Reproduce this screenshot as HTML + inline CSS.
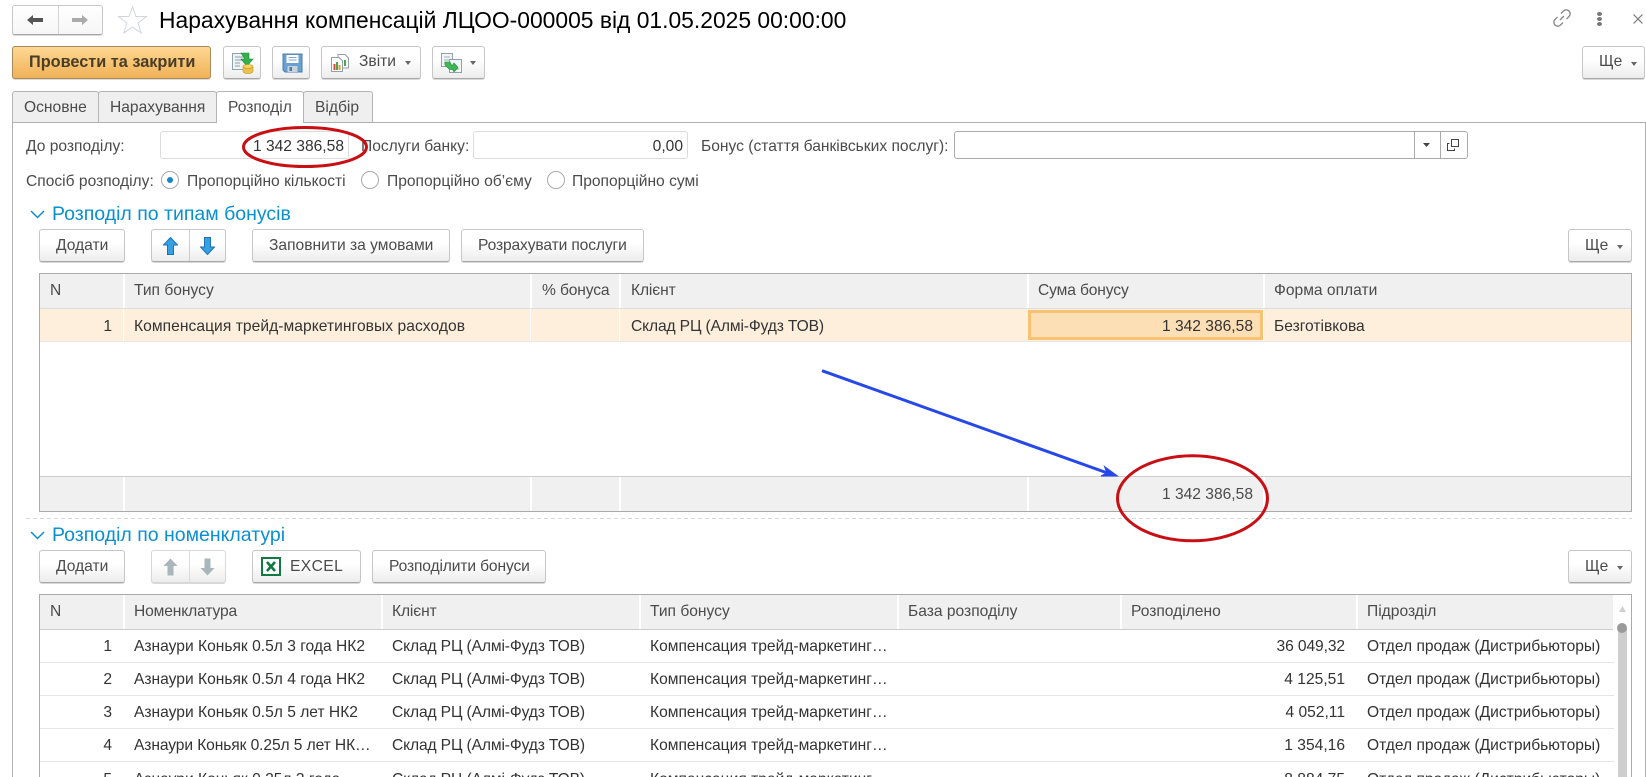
<!DOCTYPE html>
<html lang="uk">
<head>
<meta charset="utf-8">
<title>Нарахування компенсацій</title>
<style>
html,body{margin:0;padding:0;background:#fff;overflow:hidden}
#p{position:relative;width:1646px;height:777px;overflow:hidden;background:#fff;font-family:"Liberation Sans",Arial,sans-serif;font-size:15.6px;color:#4b4b4b}
#p div,#p span,#p svg{position:absolute;box-sizing:border-box}
.t{white-space:nowrap;line-height:20px;height:20px}
.d{color:#333}
.k{letter-spacing:-.13px}
.c{height:7px;overflow:hidden}
.btn{background:linear-gradient(#fff 0,#fff 40%,#ededed 100%);border:1px solid #c6c6c6;border-bottom:1px solid #a8a8a8;border-radius:3px;box-shadow:0 1px 0 #d8d8d8}
.in{background:#fff;border:1px solid #dcdcdc;border-radius:3px}
.tab{background:#efefef;border:1px solid #b4b4b4;border-bottom:none;border-radius:3px 3px 0 0;height:31px;top:91px}
.rad{width:18px;height:18px;border:1px solid #aaa;border-radius:50%;background:#fff;top:171px}
.h{background:#f0f0f0}
.sep{width:2px;background:#fff}
.hl{height:1px;background:#e6e6e6;left:40px}
.sec{color:#0a90d0;font-size:19.5px;line-height:24px;height:24px;white-space:nowrap}
</style>
</head>
<body>
<div id="p">
<!-- top nav -->
<div class="btn" style="left:12px;top:5px;width:91px;height:30px;background:linear-gradient(#fff,#f6f6f6)"></div>
<div style="left:58px;top:6px;width:1px;height:28px;background:#d4d4d4"></div>
<svg style="left:27px;top:14px" width="16" height="12" viewBox="0 0 16 12"><path d="M0 6 6 1V4H16V8H6V11Z" fill="#555"/></svg>
<svg style="left:72px;top:14px" width="16" height="12" viewBox="0 0 16 12"><path d="M16 6 10 1V4H0V8H10V11Z" fill="#aaa"/></svg>
<svg style="left:117px;top:5px" width="31" height="30" viewBox="0 0 31 30"><path d="M15.5 2 19 11.5H29.5L21 18 24.2 28 15.5 22 6.8 28 10 18 1.5 11.5H12Z" fill="#fff" stroke="#d0d6da" stroke-width="1"/></svg>
<div class="t" style="left:159px;top:8px;height:24px;line-height:24px;font-size:22.85px;color:#000">Нарахування компенсацій ЛЦОО-000005 від 01.05.2025 00:00:00</div>
<svg style="left:1552px;top:8px" width="20" height="20" viewBox="0 0 20 20" fill="none" stroke="#8a8a8a" stroke-width="1.4"><path d="M8 12 12 8"/><path d="M9 5.5 11.5 3a3.4 3.4 0 0 1 5.5 5.5L14.500 11"/><path d="M11 14.500 8.500 17A3.400 3.400 0 0 1 3 11.500L5.500 9"/></svg>
<div style="left:1597px;top:12px;width:5px;height:4px;border-radius:50%;background:#777"></div>
<div style="left:1597px;top:17px;width:5px;height:4px;border-radius:50%;background:#777"></div>
<div style="left:1597px;top:22px;width:5px;height:4px;border-radius:50%;background:#777"></div>
<svg style="left:1632px;top:13px" width="12" height="12" viewBox="0 0 12 12"><path d="M1.500 1.500 10.500 10.500M10.500 1.500 1.500 10.500" stroke="#777" stroke-width="1.200"/></svg>

<!-- toolbar -->
<div style="left:12px;top:46px;width:199px;height:33px;border:1px solid #a98a58;border-radius:3px;background:linear-gradient(#fed793,#f0b257);box-shadow:0 1px 0 #ddd"></div>
<div class="t" style="left:29px;top:52px;font-weight:bold;font-size:16.3px;color:#4a3c25">Провести та закрити</div>

<div class="btn" style="left:223px;top:46px;width:38px;height:33px"></div>
<svg style="left:231px;top:51px" width="24" height="23" viewBox="0 0 24 23"><rect x="1.500" y="2.500" width="14" height="16" fill="#eef3f6" stroke="#8fa3ad"/><path d="M4 6h9M4 9h7M4 12h5M4 15h5" stroke="#8aa0aa"/><path d="M8 2h8v6h4l-6 7-6-7h4z" transform="translate(2 0)" fill="#35b04a" stroke="#1f8a38" stroke-width=".6"/><ellipse cx="17" cy="15.500" rx="5" ry="2" fill="#f5d262" stroke="#c09a28" stroke-width=".6"/><path d="M12 15.500v5c0 1.100 2.200 2 5 2s5-.9 5-2v-5c0 1.100-2.200 2-5 2s-5-.9-5-2z" fill="#eec24a" stroke="#c09a28" stroke-width=".6"/></svg>

<div class="btn" style="left:272px;top:46px;width:38px;height:33px"></div>
<svg style="left:282px;top:53px" width="21" height="20" viewBox="0 0 21 20"><path d="M1 1H20V19H3L1 17Z" fill="#6a9fd2" stroke="#4b7cab"/><rect x="4.500" y="2" width="12" height="8" fill="#fff"/><path d="M6.500 4.500h8M6.500 7h8" stroke="#7fa6c9"/><rect x="5.500" y="13" width="10" height="6" fill="#c7d3dc"/><rect x="7.500" y="14" width="2.500" height="4" fill="#52789e"/></svg>

<div class="btn" style="left:321px;top:46px;width:100px;height:33px"></div>
<svg style="left:330px;top:53px" width="20" height="20" viewBox="0 0 20 20"><path d="M8 1.500H15L18.500 5V15H8Z" fill="#fff" stroke="#8fa0a8"/><path d="M1.500 4.500H9L12.500 8V18.500H1.500Z" fill="#fff" stroke="#8fa0a8"/><rect x="3.500" y="11" width="2" height="6" fill="#d8473a"/><rect x="6" y="9" width="2" height="8" fill="#4aa84a"/><rect x="8.500" y="12" width="2" height="5" fill="#e39b33"/><rect x="14" y="7" width="2" height="6" fill="#4aa84a"/></svg>
<div class="t" style="left:359px;top:52px">Звіти</div>
<svg style="left:405px;top:61px" width="6" height="4"><path d="M0 0H6L3 4Z" fill="#666"/></svg>

<div class="btn" style="left:432px;top:46px;width:53px;height:33px"></div>
<svg style="left:440px;top:52px" width="23" height="22" viewBox="0 0 23 22"><rect x="1.500" y="1.500" width="11" height="13" fill="#f2f5f6" stroke="#8fa0a8"/><rect x="9.500" y="7.500" width="12" height="13" fill="#f2f5f6" stroke="#8fa0a8"/><path d="M4 5h6M4 8h6M4 11h4M13 17h6" stroke="#9db0b8"/><path d="M5 10h5l2 4 2-3 4 4.500-4 4.500-1-2-4-1-4-4z" fill="#3dba55" stroke="#1f8a38" stroke-width=".6"/></svg>
<svg style="left:470px;top:61px" width="6" height="4"><path d="M0 0H6L3 4Z" fill="#666"/></svg>

<div class="btn" style="left:1582px;top:46px;width:63px;height:33px"></div>
<div class="t" style="left:1599px;top:52px">Ще</div>
<svg style="left:1631px;top:62px" width="6" height="4"><path d="M0 0H6L3 4Z" fill="#666"/></svg>

<!-- panel -->
<div style="left:12px;top:122px;width:1634px;height:655px;border:1px solid #b0b0b0;border-bottom:none"></div>
<div class="tab" style="left:12px;width:87px"></div>
<div class="t" style="left:24px;top:98px">Основне</div>
<div class="tab" style="left:98px;width:119px"></div>
<div class="t" style="left:110px;top:98px">Нарахування</div>
<div class="tab" style="left:216px;width:88px;background:#fff;height:32px"></div>
<div class="t" style="left:228px;top:98px">Розподіл</div>
<div class="tab" style="left:303px;width:70px"></div>
<div class="t" style="left:315px;top:98px">Відбір</div>

<!-- fields -->
<div class="t" style="left:26px;top:137px">До розподілу:</div>
<div class="in" style="left:160px;top:131px;width:189px;height:28px"></div>
<div class="t d" style="right:1302px;top:137px">1 342 386,58</div>
<div class="t" style="left:361px;top:137px">Послуги банку:</div>
<div class="in" style="left:473px;top:131px;width:215px;height:28px"></div>
<div class="t d" style="right:963px;top:137px">0,00</div>
<div class="t" style="left:701px;top:137px">Бонус (стаття банківських послуг):</div>
<div class="in" style="left:954px;top:131px;width:514px;height:28px;border-color:#aaa"></div>
<div style="left:1414px;top:132px;width:1px;height:26px;background:#aaa"></div>
<div style="left:1440px;top:132px;width:1px;height:26px;background:#aaa"></div>
<svg style="left:1423px;top:143px" width="7" height="4"><path d="M0 0H7L3.500 4Z" fill="#444"/></svg>
<svg style="left:1446px;top:138px" width="14" height="14" viewBox="0 0 14 14" fill="none" stroke="#444"><rect x="5.500" y="1.500" width="7" height="7"/><path d="M3.500 5.500H1.500V12.500H8.500V10.500"/></svg>

<div class="t" style="left:26px;top:172px">Спосіб розподілу:</div>
<div class="rad" style="left:161px"></div>
<div style="left:167px;top:177px;width:6px;height:6px;border-radius:50%;background:#1a86c8"></div>
<div class="t" style="left:187px;top:172px">Пропорційно кількості</div>
<div class="rad" style="left:361px"></div>
<div class="t" style="left:387px;top:172px">Пропорційно об’єму</div>
<div class="rad" style="left:547px"></div>
<div class="t" style="left:572px;top:172px">Пропорційно сумі</div>

<!-- section 1 -->
<svg style="left:30px;top:210px" width="15" height="9" fill="none"><path d="M1 1 7.500 7.500 14 1" stroke="#0a90d0" stroke-width="1.500"/></svg>
<div class="sec" style="left:52px;top:202px">Розподіл по типам бонусів</div>
<div class="btn" style="left:39px;top:229px;width:86px;height:33px"></div>
<div class="t" style="left:56px;top:236px">Додати</div>
<div class="btn" style="left:151px;top:229px;width:75px;height:33px"></div>
<div style="left:189px;top:230px;width:1px;height:31px;background:#ccc"></div>
<svg style="left:163px;top:237px" width="15" height="18" viewBox="0 0 15 18"><path d="M7.500 .5 14.500 8H10.500V17.500H4.500V8H.5Z" fill="#35a0e4" stroke="#1a74b0"/></svg>
<svg style="left:200px;top:237px" width="15" height="18" viewBox="0 0 15 18"><path d="M7.500 17.500 14.500 10H10.500V.5H4.500V10H.5Z" fill="#35a0e4" stroke="#1a74b0"/></svg>
<div class="btn" style="left:252px;top:229px;width:198px;height:33px"></div>
<div class="t" style="left:269px;top:236px">Заповнити за умовами</div>
<div class="btn" style="left:461px;top:229px;width:183px;height:33px"></div>
<div class="t k" style="left:478px;top:236px">Розрахувати послуги</div>
<div class="btn" style="left:1568px;top:229px;width:64px;height:33px"></div>
<div class="t" style="left:1585px;top:236px">Ще</div>
<svg style="left:1617px;top:245px" width="6" height="4"><path d="M0 0H6L3 4Z" fill="#666"/></svg>

<!-- table 1 -->
<div style="left:39px;top:273px;width:1593px;height:239px;border:1px solid #aaa;background:#fff"></div>
<div class="h" style="left:40px;top:274px;width:1591px;height:34px"></div>
<div style="left:40px;top:308px;width:1591px;height:1px;background:#ddd"></div>
<div style="left:40px;top:309px;width:1591px;height:32px;background:#feefdc"></div>
<div style="left:40px;top:341px;width:1591px;height:1px;background:#e8e8e8"></div>
<div class="h" style="left:40px;top:477px;width:1591px;height:34px"></div>
<div style="left:40px;top:476px;width:1591px;height:1px;background:#ccc"></div>
<div class="sep" style="left:123px;top:274px;height:34px"></div>
<div class="sep" style="left:530px;top:274px;height:34px"></div>
<div class="sep" style="left:619px;top:274px;height:34px"></div>
<div class="sep" style="left:1027px;top:274px;height:34px"></div>
<div class="sep" style="left:1263px;top:274px;height:34px"></div>
<div class="sep" style="left:123px;top:309px;height:32px;width:1px"></div>
<div class="sep" style="left:530px;top:309px;height:32px;width:1px"></div>
<div class="sep" style="left:619px;top:309px;height:32px;width:1px"></div>
<div class="sep" style="left:1263px;top:309px;height:32px;width:1px"></div>
<div class="sep" style="left:123px;top:477px;height:34px"></div>
<div class="sep" style="left:530px;top:477px;height:34px"></div>
<div class="sep" style="left:619px;top:477px;height:34px"></div>
<div class="sep" style="left:1027px;top:477px;height:34px"></div>
<div class="sep" style="left:1263px;top:477px;height:34px"></div>
<div style="left:1028px;top:310px;width:235px;height:30px;background:#fddfb5;border:3px solid #f9c272"></div>
<div class="t" style="left:50px;top:281px">N</div>
<div class="t" style="left:134px;top:281px">Тип бонусу</div>
<div class="t k" style="left:542px;top:281px">% бонуса</div>
<div class="t k" style="left:631px;top:281px">Клієнт</div>
<div class="t k" style="left:1038px;top:281px">Сума бонусу</div>
<div class="t" style="left:1274px;top:281px">Форма оплати</div>
<div class="t d" style="right:1534px;top:317px">1</div>
<div class="t d" style="left:134px;top:317px;letter-spacing:.05px">Компенсация трейд-маркетинговых расходов</div>
<div class="t d k" style="left:631px;top:317px">Склад РЦ (Алмі-Фудз ТОВ)</div>
<div class="t d" style="right:393px;top:317px">1 342 386,58</div>
<div class="t d" style="left:1274px;top:317px">Безготівкова</div>
<div class="t" style="right:393px;top:485px">1 342 386,58</div>

<div style="left:26px;top:518px;width:1606px;height:1px;background:repeating-linear-gradient(90deg,#d8d8d8 0,#d8d8d8 4px,#fff 4px,#fff 7px)"></div>

<!-- section 2 -->
<svg style="left:30px;top:531px" width="15" height="9" fill="none"><path d="M1 1 7.500 7.500 14 1" stroke="#0a90d0" stroke-width="1.500"/></svg>
<div class="sec" style="left:52px;top:523px">Розподіл по номенклатурі</div>
<div class="btn" style="left:39px;top:550px;width:86px;height:33px"></div>
<div class="t" style="left:56px;top:557px">Додати</div>
<div class="btn" style="left:151px;top:550px;width:75px;height:33px;border-color:#d8d8d8"></div>
<div style="left:189px;top:551px;width:1px;height:31px;background:#ddd"></div>
<svg style="left:163px;top:558px" width="15" height="18" viewBox="0 0 15 18"><path d="M7.500 .5 14.500 8H10.500V17.500H4.500V8H.5Z" fill="#a9b6ba"/></svg>
<svg style="left:200px;top:558px" width="15" height="18" viewBox="0 0 15 18"><path d="M7.500 17.500 14.500 10H10.500V.5H4.500V10H.5Z" fill="#a9b6ba"/></svg>
<div class="btn" style="left:252px;top:550px;width:109px;height:33px"></div>
<svg style="left:261px;top:557px" width="20" height="19" viewBox="0 0 20 19"><rect x="1" y="1" width="18" height="17" fill="#fff" stroke="#107a40" stroke-width="2"/><path d="M6 5 14 14M14 5 6 14" stroke="#107a40" stroke-width="2.600"/></svg>
<div class="t" style="left:290px;top:557px;letter-spacing:.4px">EXCEL</div>
<div class="btn" style="left:372px;top:550px;width:174px;height:33px"></div>
<div class="t k" style="left:389px;top:557px">Розподілити бонуси</div>
<div class="btn" style="left:1568px;top:550px;width:64px;height:33px"></div>
<div class="t" style="left:1585px;top:557px">Ще</div>
<svg style="left:1617px;top:566px" width="6" height="4"><path d="M0 0H6L3 4Z" fill="#666"/></svg>

<!-- table 2 -->
<div style="left:39px;top:594px;width:1593px;height:183px;border:1px solid #aaa;border-bottom:none;background:#fff"></div>
<div class="h" style="left:40px;top:595px;width:1573px;height:34px"></div>
<div style="left:40px;top:629px;width:1573px;height:1px;background:#ccc"></div>
<div class="sep" style="left:123px;top:595px;height:34px"></div>
<div class="sep" style="left:381px;top:595px;height:34px"></div>
<div class="sep" style="left:639px;top:595px;height:34px"></div>
<div class="sep" style="left:897px;top:595px;height:34px"></div>
<div class="sep" style="left:1120px;top:595px;height:34px"></div>
<div class="sep" style="left:1356px;top:595px;height:34px"></div>
<div class="hl" style="top:662px;width:1574px"></div>
<div class="hl" style="top:695px;width:1574px"></div>
<div class="hl" style="top:728px;width:1574px"></div>
<div class="hl" style="top:761px;width:1574px"></div>
<div class="t" style="left:50px;top:602px">N</div>
<div class="t k" style="left:134px;top:602px">Номенклатура</div>
<div class="t k" style="left:392px;top:602px">Клієнт</div>
<div class="t" style="left:650px;top:602px">Тип бонусу</div>
<div class="t" style="left:908px;top:602px">База розподілу</div>
<div class="t" style="left:1131px;top:602px">Розподілено</div>
<div class="t" style="left:1367px;top:602px">Підрозділ</div>

<div class="t d" style="right:1534px;top:637px">1</div>
<div class="t d" style="left:134px;top:637px">Азнаури Коньяк 0.5л 3 года НК2</div>
<div class="t d k" style="left:392px;top:637px">Склад РЦ (Алмі-Фудз ТОВ)</div>
<div class="t d" style="left:650px;top:637px">Компенсация трейд-маркетинг…</div>
<div class="t d" style="right:301px;top:637px;letter-spacing:-.1px">36 049,32</div>
<div class="t d" style="left:1367px;top:637px">Отдел продаж (Дистрибьюторы)</div>

<div class="t d" style="right:1534px;top:670px">2</div>
<div class="t d" style="left:134px;top:670px">Азнаури Коньяк 0.5л 4 года НК2</div>
<div class="t d k" style="left:392px;top:670px">Склад РЦ (Алмі-Фудз ТОВ)</div>
<div class="t d" style="left:650px;top:670px">Компенсация трейд-маркетинг…</div>
<div class="t d" style="right:301px;top:670px">4 125,51</div>
<div class="t d" style="left:1367px;top:670px">Отдел продаж (Дистрибьюторы)</div>

<div class="t d" style="right:1534px;top:703px">3</div>
<div class="t d" style="left:134px;top:703px">Азнаури Коньяк 0.5л 5 лет НК2</div>
<div class="t d k" style="left:392px;top:703px">Склад РЦ (Алмі-Фудз ТОВ)</div>
<div class="t d" style="left:650px;top:703px">Компенсация трейд-маркетинг…</div>
<div class="t d" style="right:301px;top:703px">4 052,11</div>
<div class="t d" style="left:1367px;top:703px">Отдел продаж (Дистрибьюторы)</div>

<div class="t d" style="right:1534px;top:736px">4</div>
<div class="t d" style="left:134px;top:736px;letter-spacing:-.1px">Азнаури Коньяк 0.25л 5 лет НК…</div>
<div class="t d k" style="left:392px;top:736px">Склад РЦ (Алмі-Фудз ТОВ)</div>
<div class="t d" style="left:650px;top:736px">Компенсация трейд-маркетинг…</div>
<div class="t d" style="right:301px;top:736px">1 354,16</div>
<div class="t d" style="left:1367px;top:736px">Отдел продаж (Дистрибьюторы)</div>

<div class="t d c" style="right:1534px;top:770px">5</div>
<div class="t d c" style="left:134px;top:770px">Азнаури Коньяк 0.25л 3 года</div>
<div class="t d c k" style="left:392px;top:770px">Склад РЦ (Алмі-Фудз ТОВ)</div>
<div class="t d c" style="left:650px;top:770px">Компенсация трейд-маркетинг…</div>
<div class="t d c" style="right:301px;top:770px">8 884,75</div>
<div class="t d c" style="left:1367px;top:770px">Отдел продаж (Дистрибьюторы)</div>

<!-- scrollbar -->
<svg style="left:1619px;top:606px" width="7" height="6"><path d="M3.500 0 7 6H0Z" fill="#d0d0d0"/></svg>
<div style="left:1618px;top:628px;width:9px;height:149px;background:#cecece"></div>
<div style="left:1617px;top:623px;width:10px;height:10px;border-radius:50%;background:#9a9a9a"></div>

<!-- annotations -->
<svg style="left:0;top:0" width="1646" height="777" fill="none">
<ellipse cx="305" cy="147" rx="61.500" ry="19.500" stroke="#c80f14" stroke-width="3"/>
<ellipse cx="1192.500" cy="498.300" rx="75" ry="42.500" stroke="#c80f14" stroke-width="3"/>
<path d="M822 370.700 1113 475" stroke="#2748e8" stroke-width="3"/>
<path d="M1117.500 476 1101 476 1107 473 1104.500 466.500Z" fill="#2748e8" stroke="#2748e8"/>
</svg>
</div>
</body>
</html>
